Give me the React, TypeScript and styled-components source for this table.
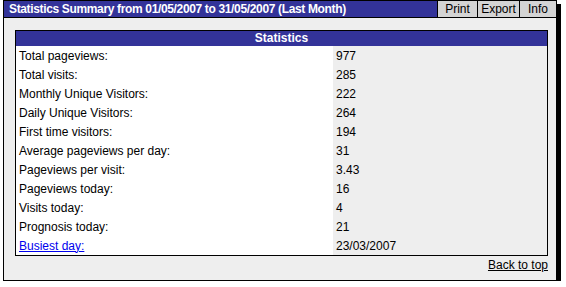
import React from "react";
import styled, { createGlobalStyle } from "styled-components";

const GlobalStyle = createGlobalStyle`
  body {
    margin: 0;
    background: #ffffff;
    font-family: "Liberation Sans", Arial, sans-serif;
    font-size: 12px;
  }
`;

const stats: [string, string, boolean?][] = [
  ["Total pageviews:", "977"],
  ["Total visits:", "285"],
  ["Monthly Unique Visitors:", "222"],
  ["Daily Unique Visitors:", "264"],
  ["First time visitors:", "194"],
  ["Average pageviews per day:", "31"],
  ["Pageviews per visit:", "3.43"],
  ["Pageviews today:", "16"],
  ["Visits today:", "4"],
  ["Prognosis today:", "21"],
  ["Busiest day:", "23/03/2007", true],
];

// outer panel
const Panel = styled.div`
  box-sizing: border-box;
  width: 554px;
  height: 281px;
  margin-left: 3px;
  border: 1px solid #000;
  background: #eeeeee;
  box-shadow: 4px 4px 0 #000;
  display: flex;
  flex-direction: column;
`;

const TitleBar = styled.div`
  display: flex;
  height: 16px;
  background: #333399;
  border-bottom: 1px solid #000;
`;

const Title = styled.div`
  flex: 1;
  color: #ffffff;
  font-weight: bold;
  font-size: 12px;
  letter-spacing: -0.35px;
  line-height: 16px;
  padding-left: 5px;
  white-space: nowrap;
`;

const ToolButton = styled.div<{ $w: number }>`
  width: ${(p) => p.$w}px;
  box-sizing: border-box;
  border-left: 1px solid #000;
  background: #d4d4d4;
  color: #000;
  font-size: 12px;
  line-height: 16px;
  text-align: center;
`;

const Body = styled.div`
  padding: 12px 8px 0 11px;
`;

const Table = styled.table`
  width: 533px;
  border-collapse: collapse;
  border: 1px solid #000;
  font-size: 12px;
`;

const HeadCell = styled.th`
  background: #333399;
  color: #ffffff;
  font-weight: bold;
  height: 15px;
  padding: 0;
  line-height: 15px;
  text-align: center;
`;

const LabelCell = styled.td`
  background: #ffffff;
  width: 314px;
  height: 19px;
  padding: 0 0 0 3px;
  color: #000;
`;

const ValueCell = styled.td`
  background: #eeeeee;
  height: 19px;
  padding: 0 0 0 3px;
  color: #000;
`;

const StatLink = styled.a`
  color: #0000ee;
  text-decoration: underline;
`;

const Footer = styled.div`
  width: 533px;
  text-align: right;
  padding-top: 2px;
  line-height: 14px;
`;

const TopLink = styled.a`
  color: #000;
  text-decoration: underline;
`;

export default function App() {
  return (
    <>
      <GlobalStyle />
      <Panel>
        <TitleBar>
          <Title>Statistics Summary from 01/05/2007 to 31/05/2007 (Last Month)</Title>
          <ToolButton $w={40}>Print</ToolButton>
          <ToolButton $w={42}>Export</ToolButton>
          <ToolButton $w={37}>Info</ToolButton>
        </TitleBar>
        <Body>
          <Table>
            <thead>
              <tr>
                <HeadCell colSpan={2}>Statistics</HeadCell>
              </tr>
            </thead>
            <tbody>
              {stats.map(([label, value, link]) => (
                <tr key={label}>
                  <LabelCell>{link ? <StatLink href="#">{label}</StatLink> : label}</LabelCell>
                  <ValueCell>{value}</ValueCell>
                </tr>
              ))}
            </tbody>
          </Table>
          <Footer>
            <TopLink href="#">Back to top</TopLink>
          </Footer>
        </Body>
      </Panel>
    </>
  );
}
